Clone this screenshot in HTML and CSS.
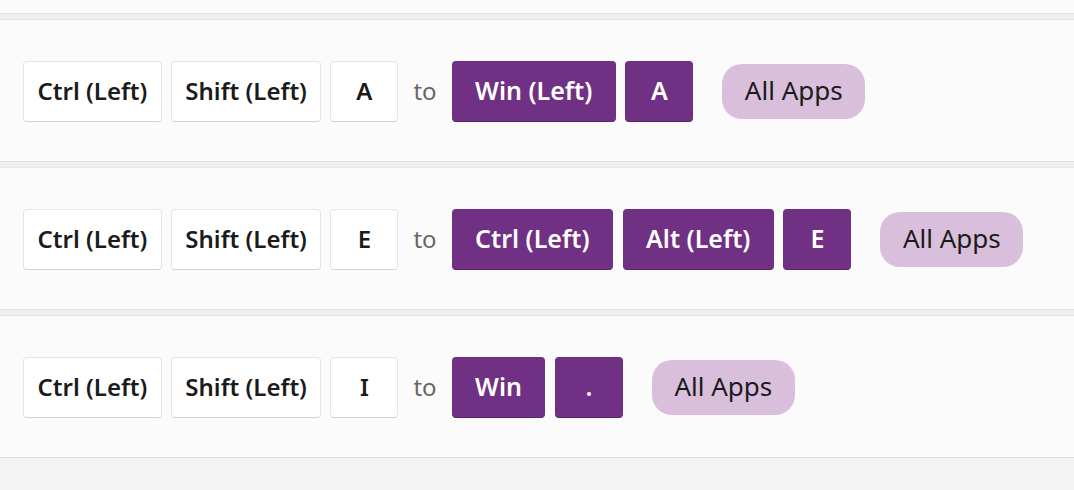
FILE: index.html
```html
<!DOCTYPE html>
<html>
<head>
<meta charset="utf-8">
<link rel="stylesheet" href="styles.css">
</head>
<body>
<div class="list">
  <div class="card card-partial"></div>
  <div class="card">
    <div class="keys">
      <span class="key">Ctrl (Left)</span>
      <span class="key">Shift (Left)</span>
      <span class="key">A</span>
    </div>
    <span class="to">to</span>
    <div class="keys keys-target">
      <span class="key key-target">Win (Left)</span>
      <span class="key key-target">A</span>
    </div>
    <span class="pill">All Apps</span>
  </div>
  <div class="card">
    <div class="keys">
      <span class="key">Ctrl (Left)</span>
      <span class="key">Shift (Left)</span>
      <span class="key">E</span>
    </div>
    <span class="to">to</span>
    <div class="keys keys-target">
      <span class="key key-target">Ctrl (Left)</span>
      <span class="key key-target">Alt (Left)</span>
      <span class="key key-target">E</span>
    </div>
    <span class="pill">All Apps</span>
  </div>
  <div class="card">
    <div class="keys">
      <span class="key">Ctrl (Left)</span>
      <span class="key">Shift (Left)</span>
      <span class="key">I</span>
    </div>
    <span class="to">to</span>
    <div class="keys keys-target">
      <span class="key key-target">Win</span>
      <span class="key key-target">.</span>
    </div>
    <span class="pill">All Apps</span>
  </div>
</div>
</body>
</html>
```

FILE: styles.css
```css
html, body {
  margin: 0;
  padding: 0;
}
body {
  background: #f3f3f3;
  font-family: "Noto Sans", "Open Sans", sans-serif;
  width: 1074px;
  height: 490px;
  overflow: hidden;
}
.list {
  display: flex;
  flex-direction: column;
  gap: 5px;
  background: #efefef;
}
.card {
  box-sizing: border-box;
  height: 143px;
  background: #fbfbfb;
  border-top: 1px solid #e6e6e6;
  border-bottom: 1px solid #dedede;
  display: flex;
  align-items: center;
  padding: 1px 0 0 23px;
}
.card-partial {
  height: 14px;
  border-top: none;
  padding: 0;
}
.keys {
  display: flex;
  gap: 9px;
}
.keys-target {
  gap: 9.5px;
}
.key {
  box-sizing: border-box;
  height: 61px;
  min-width: 68px;
  padding: 0 13.5px 2px;
  display: flex;
  align-items: center;
  justify-content: center;
  background: #ffffff;
  border: 1px solid #e5e5e5;
  border-bottom-color: #d2d2d2;
  border-radius: 4px;
  font-size: 24px;
  font-weight: 600;
  color: #1b1b1b;
}
.key-target {
  background: #703083;
  border-color: #703083;
  border-bottom-color: #5b2669;
  color: #ffffff;
  padding: 0 22.5px 2px;
  font-size: 25px;
}
.to {
  font-size: 24px;
  color: #666666;
  margin: 0 15px 2px;
}
.pill {
  margin-left: 29px;
  height: 55px;
  padding: 0 22.5px 2px;
  box-sizing: border-box;
  display: flex;
  align-items: center;
  background: #d9bfdc;
  border-radius: 20px;
  font-size: 26px;
  color: #1a1a1a;
}
```
